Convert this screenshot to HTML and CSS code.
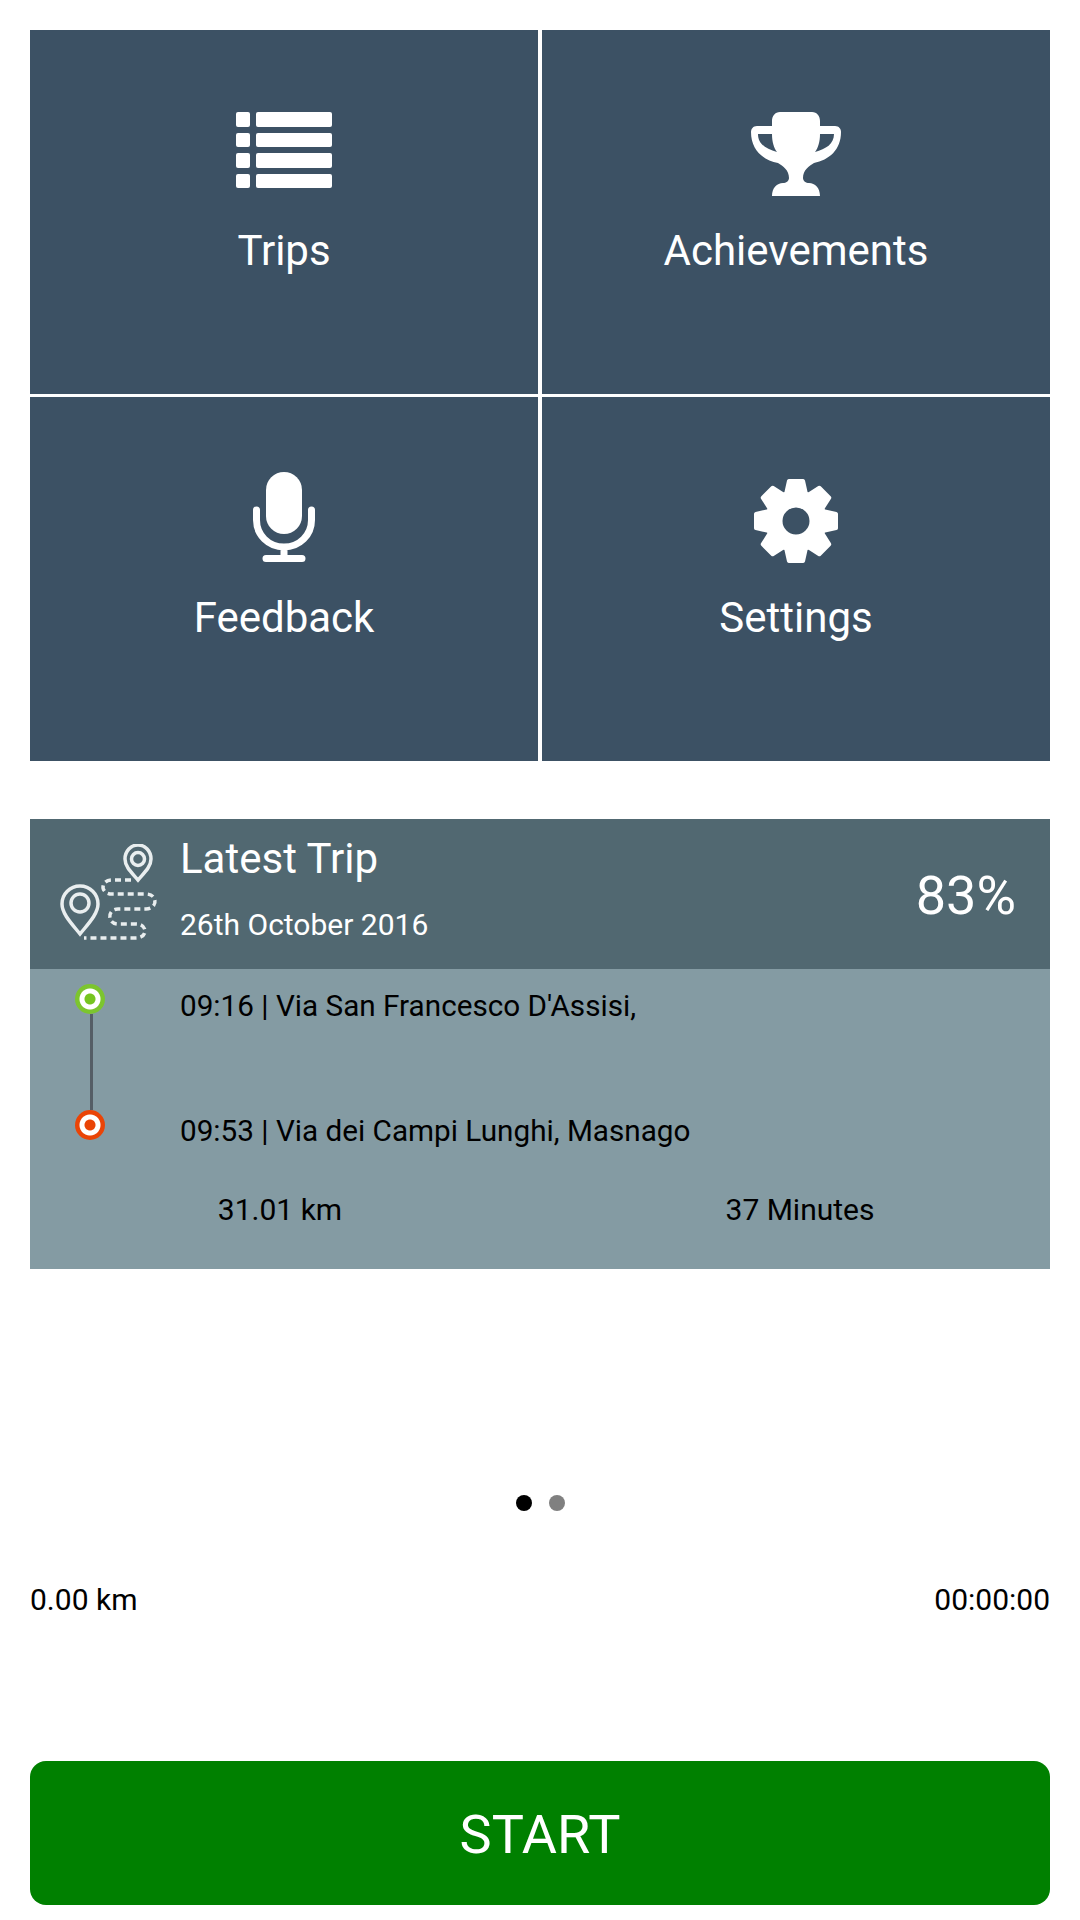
FILE: index.html
```html
<!DOCTYPE html>
<html lang="en">
<head>
    <meta charset="UTF-8">
    <meta name="viewport" content="width=device-width, initial-scale=1.0">
    <title>Dashboard</title>
    <link rel="stylesheet" href="styles.css">
</head>
<body>
    <div class="menu">
        <div class="tile">
            <svg class="tile-icon icon-trips" viewBox="236 112 96 76">
                <rect x="236" y="112" width="14" height="15" rx="2"/>
                <rect x="256" y="112" width="76" height="15" rx="2"/>
                <rect x="236" y="133" width="14" height="14" rx="2"/>
                <rect x="256" y="133" width="76" height="14" rx="2"/>
                <rect x="236" y="153" width="14" height="15" rx="2"/>
                <rect x="256" y="153" width="76" height="15" rx="2"/>
                <rect x="236" y="174" width="14" height="14" rx="2"/>
                <rect x="256" y="174" width="76" height="14" rx="2"/>
            </svg>
            <span class="tile-label">Trips</span>
        </div>
        <div class="tile">
            <svg class="tile-icon icon-trophy" viewBox="752 112 90 84">
                <path fill-rule="evenodd" d="M781 112H813C818 112 821 116 821 121V126H836C840 126 842 129 842 132C842 150 830 160 815 163C810 166 804 170 804 178C804 181 807 183 810 183C816 183 821 188 821 196H773C773 188 778 183 784 183C787 183 790 181 790 178C790 170 784 166 779 163C764 160 752 150 752 132C752 129 754 126 758 126H773V121C773 116 776 112 781 112ZM759 134H773C773 142 775 148 778 152C767 149 759 144 759 134ZM835 134H821C821 142 819 148 816 152C827 149 835 144 835 134Z"/>
            </svg>
            <span class="tile-label">Achievements</span>
        </div>
        <div class="tile">
            <svg class="tile-icon icon-mic" viewBox="253 472 62 90">
                <rect x="266" y="472" width="36" height="62" rx="18"/>
                <path class="line" d="M256.500 510v10c0 15 12 27 27.500 27s27.500-12 27.500-27v-10M284 547v11M266 558.500h36"/>
            </svg>
            <span class="tile-label">Feedback</span>
        </div>
        <div class="tile">
            <svg class="tile-icon icon-gear" viewBox="-42 -42 84 84">
                <path fill-rule="evenodd" d="M0-31a31 31 0 1 0 0 62 31 31 0 0 0 0-62zM0-13.500a13.500 13.500 0 1 1 0 27 13.500 13.500 0 0 1 0-27z"/>
                <path d="M-7-42H7a2 2 0 0 1 2 1.500L12-27H-12L-9-40.500A2 2 0 0 1-7-42z"/>
                <path d="M-7-42H7a2 2 0 0 1 2 1.500L12-27H-12L-9-40.500A2 2 0 0 1-7-42z" transform="rotate(45)"/>
                <path d="M-7-42H7a2 2 0 0 1 2 1.500L12-27H-12L-9-40.500A2 2 0 0 1-7-42z" transform="rotate(90)"/>
                <path d="M-7-42H7a2 2 0 0 1 2 1.500L12-27H-12L-9-40.500A2 2 0 0 1-7-42z" transform="rotate(135)"/>
                <path d="M-7-42H7a2 2 0 0 1 2 1.500L12-27H-12L-9-40.500A2 2 0 0 1-7-42z" transform="rotate(180)"/>
                <path d="M-7-42H7a2 2 0 0 1 2 1.500L12-27H-12L-9-40.500A2 2 0 0 1-7-42z" transform="rotate(225)"/>
                <path d="M-7-42H7a2 2 0 0 1 2 1.500L12-27H-12L-9-40.500A2 2 0 0 1-7-42z" transform="rotate(270)"/>
                <path d="M-7-42H7a2 2 0 0 1 2 1.500L12-27H-12L-9-40.500A2 2 0 0 1-7-42z" transform="rotate(315)"/>
            </svg>
            <span class="tile-label">Settings</span>
        </div>
    </div>

    <div class="trip">
        <div class="trip-head">
            <svg class="route-icon" viewBox="60 846 100 100">
                <path class="pin" d="M80 888c-10 0-18 8-18 18 0 10 10 20 18 30 8-10 18-20 18-30 0-10-8-18-18-18z"/>
                <circle class="pin" cx="80" cy="905" r="9"/>
                <path class="pin" d="M138 847c-7 0-13 6-13 14 0 8 7 14 13 21 6-7 13-13 13-21 0-8-6-14-13-14z"/>
                <circle class="pin" cx="138" cy="861" r="6.500"/>
                <path class="dash" d="M131 882H112C100 882 100 896 112 896H146C158 896 158 911 146 911H118C107 911 107 926 118 926H136C148 926 148 940 136 940H84"/>
            </svg>
            <div class="trip-title">
                <div class="trip-name">Latest Trip</div>
                <div class="trip-date">26th October 2016</div>
            </div>
            <div class="trip-score">83%</div>
        </div>
        <div class="trip-body">
            <div class="trip-path">
                <div class="timeline">
                    <span class="stop stop-start"></span>
                    <span class="stop-line"></span>
                    <span class="stop stop-end"></span>
                </div>
                <div class="stops">
                    <div>09:16 | Via San Francesco D'Assisi,</div>
                    <div>09:53 | Via dei Campi Lunghi, Masnago</div>
                </div>
            </div>
            <div class="trip-stats">
                <div>31.01 km</div>
                <div>37 Minutes</div>
            </div>
        </div>
    </div>

    <div class="pager">
        <span class="dot active"></span>
        <span class="dot"></span>
    </div>

    <div class="totals">
        <span>0.00 km</span>
        <span>00:00:00</span>
    </div>

    <button class="start">START</button>
</body>
</html>
```

FILE: styles.css
```css
* {
    box-sizing: border-box;
}

body {
    font-family: Roboto, "Liberation Sans", sans-serif;
    background-color: #fff;
    color: #000;
    display: flex;
    flex-direction: column;
    height: 1920px;
    margin: 0;
    padding: 30px 30px 15px;
}

.menu {
    display: grid;
    grid-template-columns: 508px 508px;
    grid-template-rows: 364px 364px;
    column-gap: 4px;
    row-gap: 3px;
}

.tile {
    background-color: #3c5164;
    color: #fff;
    display: flex;
    flex-direction: column;
    align-items: center;
}

.tile-icon {
    fill: #fff;
    display: block;
    margin-top: 82px;
}

.icon-trips {
    height: 76px;
    margin-bottom: 38px;
}

.icon-trophy,
.icon-gear {
    height: 84px;
    margin-bottom: 30px;
}

.icon-mic {
    height: 90px;
    margin-top: 75px;
    margin-bottom: 31px;
}

.tile-icon .line {
    fill: none;
    stroke: #fff;
    stroke-width: 7;
    stroke-linecap: round;
}

.tile-label {
    font-size: 42px;
    line-height: 48px;
    padding-top: 1px;
}

.trip {
    margin-top: 58px;
}

.trip-head {
    background-color: #516871;
    color: #fff;
    height: 150px;
    display: flex;
    align-items: center;
    padding: 0 34px 0 30px;
}

.route-icon {
    width: 100px;
    height: 100px;
    margin-right: 20px;
    flex-shrink: 0;
    fill: none;
    stroke: #e9eeef;
}

.route-icon .pin {
    stroke-width: 3.500;
}

.route-icon .dash {
    fill: none;
    stroke-width: 3.500;
    stroke-dasharray: 6 4;
}

.trip-title {
    flex-grow: 1;
    align-self: flex-start;
    padding-top: 17px;
}

.trip-name {
    font-size: 42px;
    line-height: 46px;
}

.trip-date {
    font-size: 30px;
    line-height: 34px;
    margin-top: 26px;
}

.trip-score {
    font-size: 54px;
    padding-top: 3px;
}

.trip-body {
    background-color: #849ba3;
    height: 300px;
    padding: 15px 0 0;
    font-size: 30px;
}

.trip-path {
    display: flex;
}

.timeline {
    width: 150px;
    height: 156px;
    display: flex;
    flex-direction: column;
    align-items: center;
    padding-right: 30px;
}

.stop {
    width: 30px;
    height: 30px;
    border-radius: 50%;
    flex-shrink: 0;
}

.stop-start {
    background: radial-gradient(circle, #76c520 5px, #fff 6px, #fff 10px, #7cc52e 11px);
}

.stop-end {
    background: radial-gradient(circle, #ea4406 5px, #fff 6px, #fff 10px, #ea4406 11px);
}

.stop-line {
    width: 3px;
    flex-grow: 1;
    margin-left: 3px;
    background-color: #555e66;
}

.stops {
    display: flex;
    flex-direction: column;
    justify-content: space-between;
    height: 169px;
    font-size: 29.700px;
    line-height: 44px;
}

.trip-stats {
    display: grid;
    grid-template-columns: 1fr 1fr;
    column-gap: 20px;
    text-align: center;
    line-height: 34px;
    margin-top: 40px;
}

.pager {
    display: flex;
    justify-content: center;
    gap: 17px;
    margin-top: 226px;
}

.dot {
    width: 16px;
    height: 16px;
    border-radius: 50%;
    background-color: #808080;
}

.dot.active {
    background-color: #000;
}

.totals {
    display: flex;
    justify-content: space-between;
    font-size: 30px;
    line-height: 34px;
    margin-top: 72px;
}

.start {
    margin-top: auto;
    height: 144px;
    padding-top: 4px;
    background-color: #008000;
    color: #fff;
    border: none;
    border-radius: 16px;
    font-family: inherit;
    font-size: 54px;
    cursor: pointer;
}
```
